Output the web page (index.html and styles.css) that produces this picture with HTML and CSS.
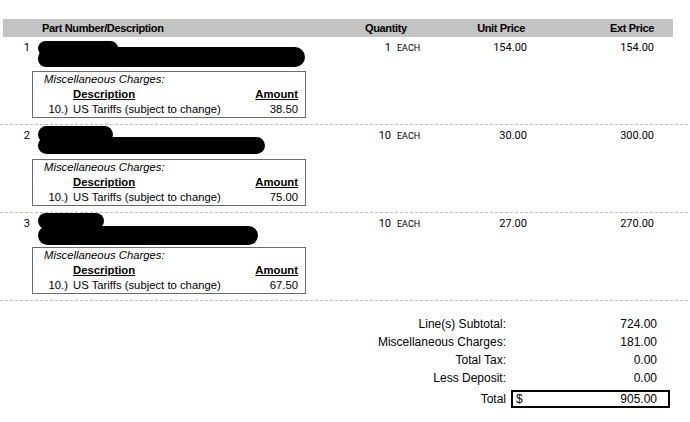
FILE: index.html
```html
<!DOCTYPE html>
<html>
<head>
<meta charset="utf-8">
<link rel="stylesheet" href="styles.css">
</head>
<body>
<div class="invoice">
  <div class="head">
    <div class="h-desc">Part Number/Description</div>
    <div class="h-qty">Quantity</div>
    <div class="h-unit">Unit Price</div>
    <div class="h-ext">Ext Price</div>
  </div>

  <div class="line">
    <div class="num">1</div>
    <div class="desc">
      <div class="redact"><span class="blob a1"></span><span class="blob b1"></span></div>
      <div class="misc">
        <div class="m-title">Miscellaneous Charges:</div>
        <div></div><div class="m-h">Description</div><div class="m-h m-r">Amount</div>
        <div class="m-r">10.)</div><div>US Tariffs (subject to change)</div><div class="m-r">38.50</div>
      </div>
    </div>
    <div class="qty"><span class="q">1</span><span class="uom">EACH</span></div>
    <div class="unit">154.00</div>
    <div class="ext">154.00</div>
  </div>
  <div class="dash"></div>

  <div class="line">
    <div class="num">2</div>
    <div class="desc">
      <div class="redact"><span class="blob a2"></span><span class="blob b2"></span></div>
      <div class="misc">
        <div class="m-title">Miscellaneous Charges:</div>
        <div></div><div class="m-h">Description</div><div class="m-h m-r">Amount</div>
        <div class="m-r">10.)</div><div>US Tariffs (subject to change)</div><div class="m-r">75.00</div>
      </div>
    </div>
    <div class="qty"><span class="q">10</span><span class="uom">EACH</span></div>
    <div class="unit">30.00</div>
    <div class="ext">300.00</div>
  </div>
  <div class="dash"></div>

  <div class="line">
    <div class="num">3</div>
    <div class="desc">
      <div class="redact"><span class="blob a3"></span><span class="blob b3"></span></div>
      <div class="misc">
        <div class="m-title">Miscellaneous Charges:</div>
        <div></div><div class="m-h">Description</div><div class="m-h m-r">Amount</div>
        <div class="m-r">10.)</div><div>US Tariffs (subject to change)</div><div class="m-r">67.50</div>
      </div>
    </div>
    <div class="qty"><span class="q">10</span><span class="uom">EACH</span></div>
    <div class="unit">27.00</div>
    <div class="ext">270.00</div>
  </div>
  <div class="dash"></div>

  <div class="totals">
    <div class="t-label">Line(s) Subtotal:</div><div class="t-val">724.00</div>
    <div class="t-label">Miscellaneous Charges:</div><div class="t-val">181.00</div>
    <div class="t-label">Total Tax:</div><div class="t-val">0.00</div>
    <div class="t-label">Less Deposit:</div><div class="t-val">0.00</div>
    <div class="t-label t-last">Total</div>
    <div class="t-box t-last"><span>$</span><span>905.00</span></div>
  </div>
</div>
</body>
</html>
```

FILE: styles.css
```css
body {
  margin: 0;
  background: #fff;
  color: #000;
  font-family: "Liberation Sans", Arial, sans-serif;
}

.invoice {
  width: 690px;
  padding-top: 19px;
}

.head {
  margin-left: 3px;
  width: 670px;
  height: 18px;
  background: #c3c3c3;
  display: grid;
  grid-template-columns: 303px 124px 95px 129px 1fr;
  font-weight: bold;
  font-size: 11px;
  letter-spacing: -0.35px;
  line-height: 18px;
}

.h-desc { padding-left: 39px; }
.h-qty { padding-left: 59px; }
.h-unit, .h-ext { text-align: right; }

.line {
  display: grid;
  grid-template-columns: 30px 276px 124px 97px 127px;
  padding: 3px 0 6px;
  font-family: Roboto, "Liberation Sans", sans-serif;
  font-size: 11px;
  line-height: 15px;
}

.num, .unit, .ext { text-align: right; }

.qty { display: flex; align-items: baseline; }
.q { width: 85px; text-align: right; }
.uom { margin-left: 6px; font-size: 9px; }

.desc { padding-left: 2px; }

.redact {
  height: 31px;
  display: flex;
  flex-direction: column;
  align-items: flex-start;
}

.blob {
  display: block;
  background: #000;
  margin-left: 6px;
  border-radius: 10px;
}

.a1 { margin-top: 1px; width: 80px; height: 15px; }
.b1 { margin-top: -9px; width: 267px; height: 20px; border-radius: 12px 10px 10px 8px; }
.a2 { margin-top: -2px; width: 75px; height: 17px; }
.b2 { margin-top: -6px; width: 227px; height: 17px; }
.a3 { margin-top: -3px; width: 66px; height: 16px; }
.b3 { margin-top: -3px; width: 220px; height: 19px; }

.misc {
  width: 274px;
  height: 47px;
  box-sizing: border-box;
  border: 1px solid #6b6b6b;
  padding: 0 7px 0 10px;
  display: grid;
  grid-template-columns: 25px 1fr auto;
  column-gap: 5px;
  font-family: "Liberation Sans", Arial, sans-serif;
  font-size: 11.3px;
  line-height: 15px;
}

.m-title { grid-column: 1 / -1; font-style: italic; padding-left: 1px; }
.m-h { font-weight: bold; text-decoration: underline; }
.m-r { text-align: right; }

.dash {
  height: 1px;
  background: repeating-linear-gradient(to right, #bdbdbd 0 3px, transparent 3px 5px);
}

.totals {
  margin-top: 14px;
  display: grid;
  grid-template-columns: 1fr 159px;
  column-gap: 5px;
  padding-right: 20px;
  font-size: 12px;
  line-height: 18px;
}

.t-label { text-align: right; }
.t-val { text-align: right; padding-right: 13px; }

.t-last { margin-top: 3px; }

.t-box {
  height: 18px;
  box-sizing: border-box;
  border: 2px solid #000;
  padding: 0 11px 0 3px;
  display: flex;
  justify-content: space-between;
  line-height: 14px;
}
```
